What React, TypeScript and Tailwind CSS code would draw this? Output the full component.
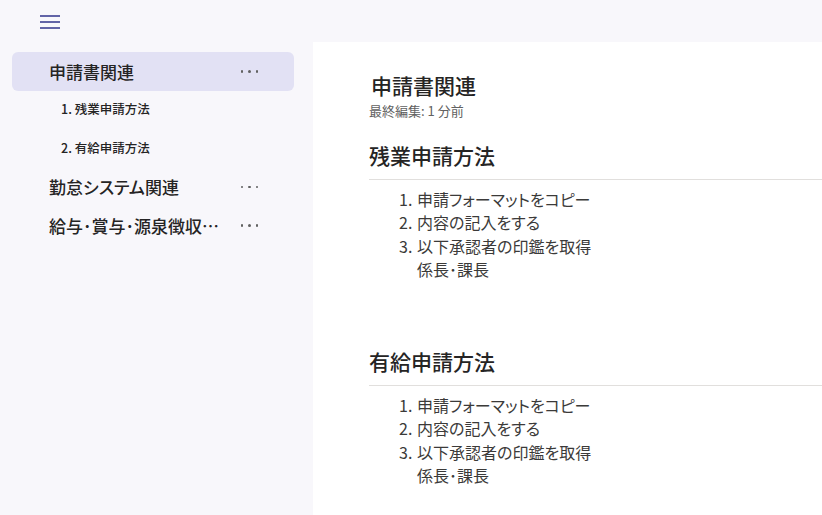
const font = { fontFamily: '"Noto Sans CJK JP", "Noto Sans", sans-serif' }

const steps = ['申請フォーマットをコピー', '内容の記入をする', '以下承認者の印鑑を取得']

const Section = ({ title }: { title: string }) => (
  <div>
    <h2 className="text-[21px] font-medium text-[#252424] leading-[30px]">{title}</h2>
    <div className="mt-[9px] border-t border-[#e1dfdd]"></div>
    <ol className="mt-[8px] pl-[30px] text-[16px] leading-[23.3px] text-[#3b3a39] [font-feature-settings:'palt']">
      {steps.map((s, i) => (
        <li key={s} className="flex">
          <span className="w-[18px]">{i + 1}.</span>
          <span>{s}</span>
        </li>
      ))}
      <li className="pl-[18px]">係長･課長</li>
    </ol>
  </div>
)

const Dots = () => (
  <div className="flex gap-[5px] mr-[36px]">
    <span className="w-[2.5px] h-[2.5px] rounded-full bg-[#616161]"></span>
    <span className="w-[2.5px] h-[2.5px] rounded-full bg-[#616161]"></span>
    <span className="w-[2.5px] h-[2.5px] rounded-full bg-[#616161]"></span>
  </div>
)

const NavItem = ({ label, active, sub }: { label: string; active?: boolean; sub?: boolean }) => (
  <div
    className={`h-[38.5px] flex items-center rounded-md [font-feature-settings:'palt'] ${active ? 'bg-[#e2e1f4]' : ''} ${
      sub ? 'pl-[49px] text-[12.5px] font-medium text-[#252424]' : 'pl-[37px] text-[17px] font-medium text-[#252424]'
    }`}
  >
    <span className={sub ? 'flex-1' : 'w-[174px] truncate'}>{label}</span>
    {!sub && <span className="flex-1"></span>}
    {!sub && <Dots />}
  </div>
)

export default function App() {
  return (
    <div className="w-[822px] h-[515px] bg-[#f8f7fb] flex flex-col overflow-hidden" style={font}>
      <div className="h-[42px] shrink-0 flex items-center pl-[40px]">
        <div className="flex flex-col gap-[4px] pt-[2px]">
          <div className="w-[20px] h-[2px] bg-[#6264a7]"></div>
          <div className="w-[20px] h-[2px] bg-[#6264a7]"></div>
          <div className="w-[20px] h-[2px] bg-[#6264a7]"></div>
        </div>
      </div>
      <div className="flex flex-1 min-h-0">
        <aside className="w-[313px] shrink-0 pt-[10px] pl-[12px] pr-[19px]">
          <NavItem label="申請書関連" active />
          <NavItem label="1. 残業申請方法" sub />
          <NavItem label="2. 有給申請方法" sub />
          <NavItem label="勤怠システム関連" />
          <NavItem label="給与･賞与･源泉徴収票関連" />
        </aside>
        <main className="flex-1 bg-white pl-[56px] pt-[29px]">
          <h1 className="pl-[2px] text-[21px] font-medium text-[#252424] leading-[28px]">申請書関連</h1>
          <div className="mt-[3px] text-[13px] text-[#616161] leading-[18px]">最終編集: 1 分前</div>
          <div className="mt-[20px]">
            <Section title="残業申請方法" />
          </div>
          <div className="mt-[65px]">
            <Section title="有給申請方法" />
          </div>
        </main>
      </div>
    </div>
  )
}
